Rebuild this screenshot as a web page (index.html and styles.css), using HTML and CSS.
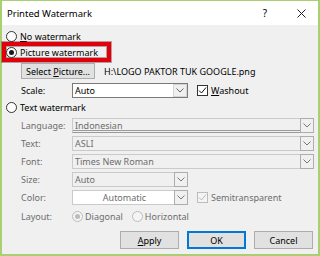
FILE: index.html
```html
<!DOCTYPE html>
<html lang="en">
<head>
    <meta charset="UTF-8" />
    <title>Printed Watermark</title>
    <link rel="stylesheet" href="styles.css">
</head>
<body>
<div class="window">
    <div class="titlebar">
        <span class="title">Printed Watermark</span>
        <span class="help">?</span>
        <svg class="close" width="9" height="9" viewBox="0 0 9 9"><path d="M0.5 0.5 L8.5 8.5 M8.5 0.5 L0.5 8.5" stroke="#222" stroke-width="1"/></svg>
    </div>

    <div class="content">
        <!-- watermark type -->
        <div class="option"><span class="radio"></span><span><u>N</u>o watermark</span></div>
        <div class="highlight">
            <div class="option"><span class="radio on"></span><span>Picture watermark</span></div>
        </div>

        <div class="picture-row">
            <button class="btn select">Select <u>P</u>icture...</button>
            <span class="path">H:\LOGO PAKTOR TUK GOOGLE.png</span>
        </div>

        <div class="field-row scale-row">
            <span class="label dark">Scale:</span>
            <div class="combo short enabled">
                <span class="value dark">Auto</span>
                <span class="arrow"><svg width="8" height="5" viewBox="0 0 8 5"><path d="M0.5 0.5 L4 4 L7.5 0.5" fill="none" stroke="#666"/></svg></span>
            </div>
            <div class="check"><span class="box"><svg width="9" height="9" viewBox="0 0 9 9"><path d="M1 4.5 L3.5 7 L8 1.5" fill="none" stroke="#111"/></svg></span><span><u>W</u>ashout</span></div>
        </div>

        <div class="option text-option"><span class="radio"></span><span>Text watermark</span></div>

        <div class="field-row lang-row">
            <span class="label">Language:</span>
            <div class="combo wide double">
                <span class="value">Indonesian</span>
                <span class="arrow"><svg width="8" height="5" viewBox="0 0 8 5"><path d="M0.5 0.5 L4 4 L7.5 0.5" fill="none" stroke="#777"/></svg></span>
            </div>
        </div>

        <div class="field-row">
            <span class="label">Text:</span>
            <div class="combo wide">
                <span class="value">ASLI</span>
                <span class="arrow"><svg width="8" height="5" viewBox="0 0 8 5"><path d="M0.5 0.5 L4 4 L7.5 0.5" fill="none" stroke="#777"/></svg></span>
            </div>
        </div>

        <div class="field-row">
            <span class="label">Font:</span>
            <div class="combo wide">
                <span class="value">Times New Roman</span>
                <span class="arrow"><svg width="8" height="5" viewBox="0 0 8 5"><path d="M0.5 0.5 L4 4 L7.5 0.5" fill="none" stroke="#777"/></svg></span>
            </div>
        </div>

        <div class="field-row">
            <span class="label">Size:</span>
            <div class="combo short">
                <span class="value">Auto</span>
                <span class="arrow"><svg width="8" height="5" viewBox="0 0 8 5"><path d="M0.5 0.5 L4 4 L7.5 0.5" fill="none" stroke="#777"/></svg></span>
            </div>
        </div>

        <div class="field-row">
            <span class="label">Color:</span>
            <div class="combo short white">
                <span class="value center">Automatic</span>
                <span class="arrow"><svg width="8" height="5" viewBox="0 0 8 5"><path d="M0.5 0.5 L4 4 L7.5 0.5" fill="none" stroke="#777"/></svg></span>
            </div>
            <div class="check off"><span class="box"><svg width="9" height="9" viewBox="0 0 9 9"><path d="M1 4.5 L3.5 7 L8 1.5" fill="none" stroke="#bbb"/></svg></span><span>Semitransparent</span></div>
        </div>

        <div class="layout-row">
            <span class="label">Layout:</span>
            <div class="option off"><span class="radio on"></span><span>Diagonal</span></div>
            <div class="option off horiz"><span class="radio"></span><span>Horizontal</span></div>
        </div>

        <div class="actions">
            <button class="btn"><u>A</u>pply</button>
            <button class="btn default">OK</button>
            <button class="btn">Cancel</button>
        </div>
    </div>
</div>
</body>
</html>
```

FILE: styles.css
```css
* {
    box-sizing: border-box;
}

body {
    margin: 0;
    font-family: "Noto Sans", sans-serif;
    font-size: 9px;
    color: #000;
}

.window {
    width: 320px;
    height: 256px;
    border: 2px solid #a8d070;
    border-top-width: 1px;
    background: #f0f0f0;
    display: flex;
    flex-direction: column;
}

.titlebar {
    height: 24px;
    flex: none;
    background: #fff;
    display: flex;
    align-items: center;
    padding: 0 12px 0 5px;
}

.title {
    font-size: 9.5px;
}

.help {
    margin-left: auto;
    margin-right: 30px;
    font-size: 10px;
}

.content {
    flex: 1;
    padding: 5px 4px 0 4px;
    display: flex;
    flex-direction: column;
}

.option {
    display: flex;
    align-items: center;
    gap: 3px;
    height: 12px;
}

.radio {
    width: 11px;
    height: 11px;
    flex: none;
    border: 1px solid #333;
    border-radius: 50%;
    background: #fff;
    display: flex;
    align-items: center;
    justify-content: center;
}

.radio.on::after {
    content: "";
    width: 5px;
    height: 5px;
    border-radius: 50%;
    background: #1a1a1a;
}

.highlight {
    margin-left: -4px;
    width: 109px;
    height: 20px;
    border: 4px solid #e0000c;
    box-shadow: 0 0 0 1px rgba(90, 0, 0, 0.35), inset 0 0 0 1px rgba(90, 0, 0, 0.35);
}

.picture-row {
    margin-top: 1px;
    height: 16px;
    display: flex;
    align-items: center;
}

.btn {
    font-family: "Noto Sans", sans-serif;
    font-size: 9px;
    color: #000;
    background: #e1e1e1;
    border: 1px solid #adadad;
    padding: 0;
    height: 18px;
    width: 59px;
}

.btn.select {
    margin-left: 15px;
    width: 74px;
    height: 16px;
}

.path {
    margin-left: 9px;
}

.field-row {
    display: flex;
    align-items: center;
    height: 15px;
    margin-top: 3px;
}

.scale-row {
    margin-top: 4px;
}

.lang-row {
    margin-top: 5px;
}

.text-option {
    margin-top: 3px;
}

.label {
    margin-left: 15px;
    width: 51px;
    flex: none;
    color: #6d6d6d;
}

.dark {
    color: #000 !important;
}

.combo {
    height: 15px;
    display: flex;
    border: 1px solid #cacaca;
    background: #f0f0f0;
}

.combo.wide {
    width: 242px;
}

.combo.short {
    width: 116px;
}

.combo.enabled {
    border-color: #7a7a7a;
    background: #fff;
}

.combo.white {
    background: #fff;
}

.combo.double {
    border-bottom-color: #9a9a9a;
    box-shadow: inset 0 -1px 0 #f0f0f0, inset 0 -2px 0 #9a9a9a;
}

.value {
    flex: 1;
    padding-left: 2px;
    line-height: 13px;
    color: #6d6d6d;
}

.value.center {
    text-align: center;
}

.arrow {
    width: 14px;
    flex: none;
    margin: -1px -1px -1px 0;
    border: 1px solid #adadad;
    background: #f0f0f0;
    display: flex;
    align-items: center;
    justify-content: center;
}

.combo.enabled .arrow {
    margin: 0;
    border-color: #d4d4d4;
    background: #f0f0f0;
}

.check {
    display: flex;
    align-items: center;
    gap: 3px;
    margin-left: 9px;
}

.box {
    width: 11px;
    height: 11px;
    border: 1px solid #333;
    background: #fff;
    display: flex;
    align-items: center;
    justify-content: center;
}

.check.off {
    color: #6d6d6d;
}

.check.off .box {
    border-color: #bcbcbc;
    background: #f4f4f4;
}

.layout-row {
    display: flex;
    align-items: center;
    height: 12px;
    margin-top: 5px;
}

.option.off {
    color: #6d6d6d;
    gap: 2px;
}

.option.off .radio {
    border-color: #bcbcbc;
    background: #f4f4f4;
}

.option.off .radio.on::after {
    background: #bcbcbc;
}

.option.horiz {
    margin-left: 9px;
}

.actions {
    display: flex;
    justify-content: flex-end;
    gap: 8px;
    margin: 9px 1px 0 0;
}

.btn.default {
    border-color: #0078d7;
    box-shadow: inset 0 0 0 1px #0078d7;
}
```
